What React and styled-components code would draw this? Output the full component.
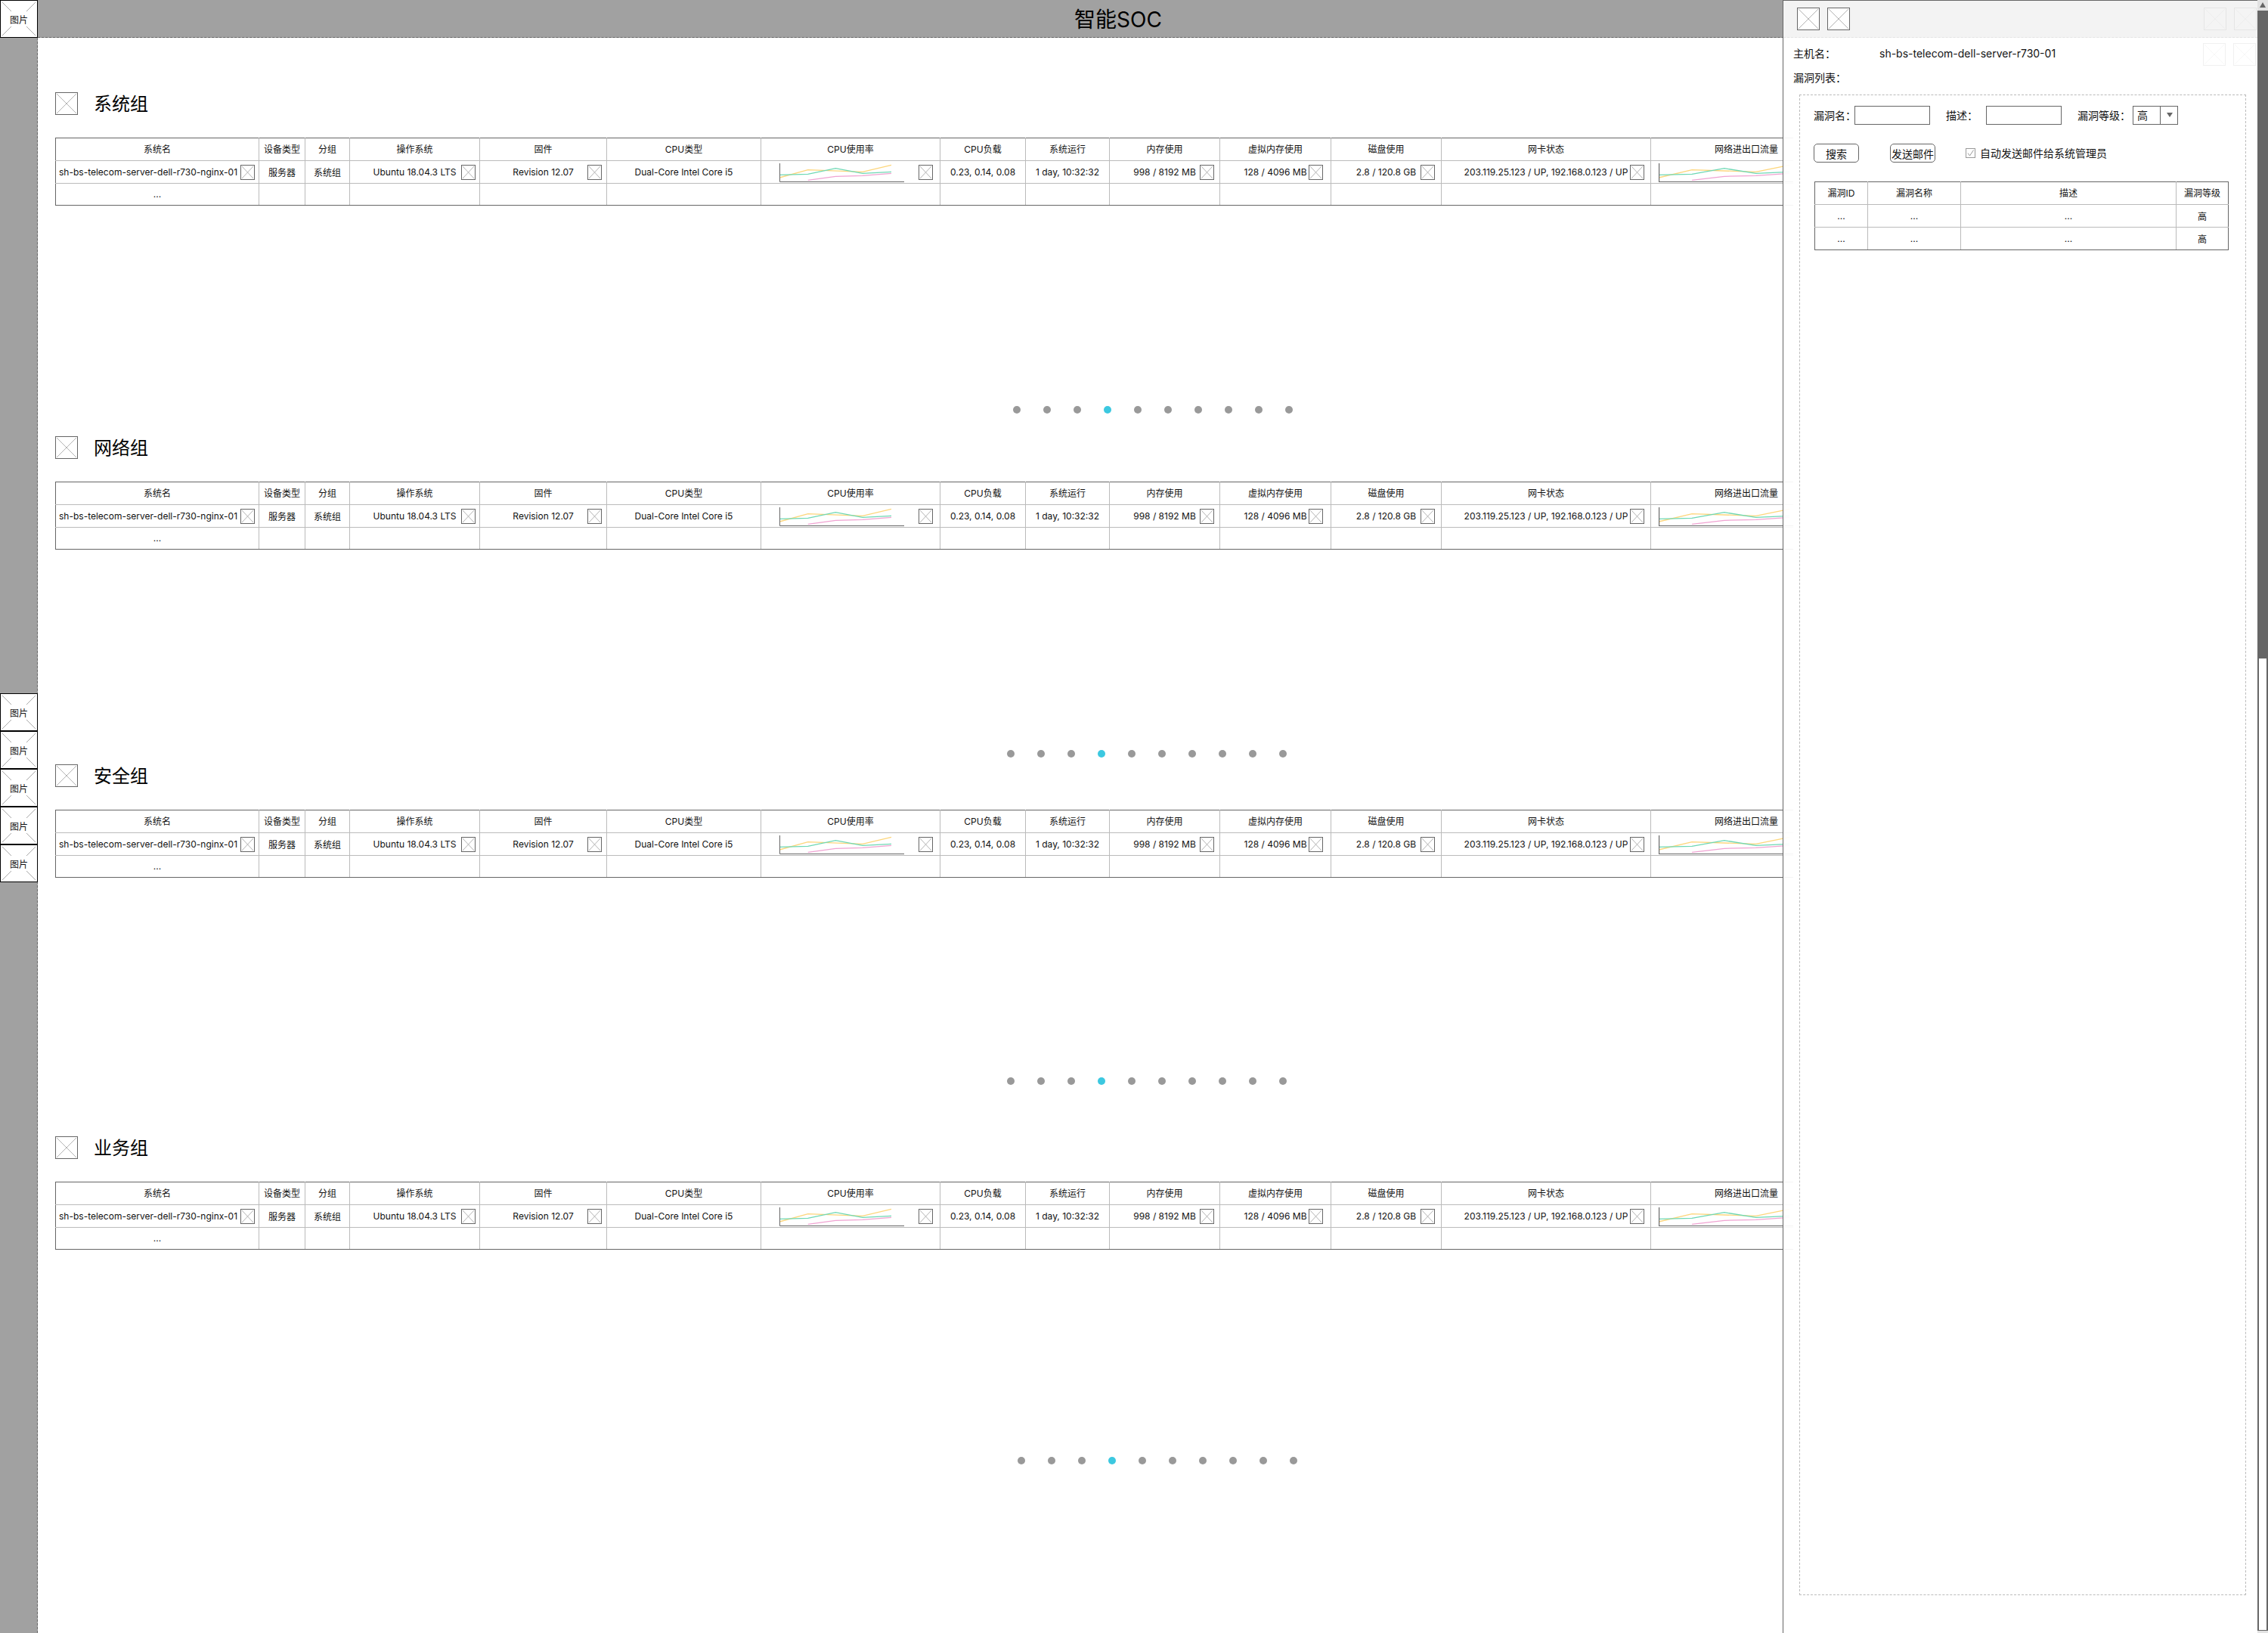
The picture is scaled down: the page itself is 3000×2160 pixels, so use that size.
import React from "react";
import styled, { createGlobalStyle } from "styled-components";

const FONT = `Inter, "Noto Sans CJK SC", sans-serif`;

const GlobalStyle = createGlobalStyle`
  html, body {
    margin: 0;
    padding: 0;
    background: #fff;
  }
  * {
    box-sizing: border-box;
  }
`;

const Page = styled.div`
  position: relative;
  width: 3000px;
  height: 2160px;
  overflow: hidden;
  display: grid;
  grid-template-columns: 50px 1fr;
  grid-template-rows: 50px 1fr;
  font-family: ${FONT};
  color: #111;
`;

const Header = styled.header`
  grid-column: 1 / 3;
  display: flex;
  align-items: flex-start;
  height: 50px;
  background: #a1a1a1;
  border-bottom: 1px dashed #666;
`;

const HeaderTitle = styled.h1`
  flex: 1;
  margin: 0;
  padding: 2px 92px 0 0;
  font-size: 28px;
  font-weight: 400;
  line-height: 48px;
  text-align: center;
  color: #000;
`;

const Rail = styled.aside`
  display: flex;
  flex-direction: column;
  padding-top: 867px;
  background: #a1a1a1;
  border-right: 1px dashed #666;
`;

const Main = styled.main`
  width: 2322px;
  height: 2110px;
  overflow: hidden;
  padding-left: 23px;
`;

const Section = styled.section`
  height: ${props => props.$height}px;
  padding-top: ${props => props.$top}px;
`;

const SectionHead = styled.div`
  display: flex;
  align-items: center;
  gap: 21px;
  height: 30px;
  margin-bottom: 30px;
`;

const SectionTitle = styled.h2`
  margin: 0 0 3px;
  font-size: 24px;
  font-weight: 400;
  color: #000;
`;

/* placeholder for a missing picture */
const Frame = styled.div`
  position: relative;
  flex-shrink: 0;
  width: ${props => props.$w}px;
  height: ${props => props.$h}px;
  background: #fff;
  border: 1px solid #666;

  svg {
    display: block;
    width: 100%;
    height: 100%;
  }
`;

function Cross({ w, h }) {
  const iw = w - 2;
  const ih = h - 2;
  return (
    <Frame $w={w} $h={h}>
      <svg viewBox={`0 0 ${iw} ${ih}`}>
        <path d={`M1 1L${iw - 1} ${ih - 1}M${iw - 1} 1L1 ${ih - 1}`} stroke="#b4b4b4" strokeWidth="1" fill="none" />
      </svg>
    </Frame>
  );
}

const LogoBox = styled.div`
  position: relative;
  flex-shrink: 0;
  width: 50px;
  height: 50px;
  background: #fff;
  border: 1px solid #000;
  display: flex;
  align-items: center;
  justify-content: center;
  font-size: 12px;
  color: #111;

  svg {
    position: absolute;
    inset: 0;
    width: 100%;
    height: 100%;
  }

  span {
    position: relative;
  }
`;

function Logo() {
  return (
    <LogoBox>
      <svg viewBox="0 0 48 48">
        <path d="M2 2L14 14M46 2L34 14M2 46L14 34M46 46L34 34" stroke="#aaa" strokeWidth="1" fill="none" />
      </svg>
      <span>图片</span>
    </LogoBox>
  );
}

const Table = styled.table`
  table-layout: fixed;
  border-collapse: collapse;
  width: ${props => props.$width}px;
  font-size: 12px;

  tr > *:first-child {
    border-left-color: #666;
  }
  tr > *:last-child {
    border-right-color: #666;
  }
  thead th {
    border-top-color: #666;
  }
  tbody tr:last-child td {
    border-bottom-color: #666;
  }
`;

const Cell = styled.td`
  position: relative;
  height: ${props => props.$h || 30}px;
  padding: ${props => (props.$left ? "0 0 1px 4px" : "0 0 1px")};
  border: 1px solid #bbb;
  text-align: ${props => (props.$left ? "left" : "center")};
  white-space: nowrap;
  overflow: visible;
  font-weight: 400;
`;

const HeadCell = styled(Cell).attrs({ as: "th" })`
  width: ${props => props.$w}px;
  padding-bottom: 2px;
`;

const CellIcon = styled.div`
  position: absolute;
  top: 5px;
  right: ${props => props.$right}px;
`;

const ChartBox = styled.div`
  position: absolute;
  top: 3px;
  left: ${props => props.$left}px;
  width: ${props => props.$w}px;
  height: 26px;

  svg {
    display: block;
    width: 100%;
    height: 100%;
  }
`;

function Spark({ left, w }) {
  return (
    <ChartBox $left={left} $w={w}>
      <svg viewBox="0 0 165 26" preserveAspectRatio="none">
        <path d="M0 19L37.7 8.7L110 11.3L148 2.3" fill="none" stroke="#fdd67c" strokeWidth="1.3" />
        <path d="M0 15.3L37.7 14.3L74.3 6.7L110 13.3L148 11.3" fill="none" stroke="#6ed8b4" strokeWidth="1.3" />
        <path d="M37.7 22.3L74.3 17.3L110 16.3L148 13.3" fill="none" stroke="#f0a3d2" strokeWidth="1.3" />
        <path d="M0.5 0V24.5H165" fill="none" stroke="#666" strokeWidth="1" />
      </svg>
    </ChartBox>
  );
}

const HOST_COLUMNS = [
  { title: "系统名", w: 269, value: "sh-bs-telecom-server-dell-r730-nginx-01", left: true, icon: 5 },
  { title: "设备类型", w: 61, value: "服务器" },
  { title: "分组", w: 59, value: "系统组" },
  { title: "操作系统", w: 172, value: "Ubuntu 18.04.3 LTS", icon: 5 },
  { title: "固件", w: 168, value: "Revision 12.07", icon: 6 },
  { title: "CPU类型", w: 204, value: "Dual-Core Intel Core i5" },
  { title: "CPU使用率", w: 237, chart: { left: 24, w: 165 }, icon: 9 },
  { title: "CPU负载", w: 113, value: "0.23, 0.14, 0.08" },
  { title: "系统运行", w: 111, value: "1 day, 10:32:32" },
  { title: "内存使用", w: 146, value: "998 / 8192 MB", icon: 7 },
  { title: "虚拟内存使用", w: 147, value: "128 / 4096 MB", icon: 10 },
  { title: "磁盘使用", w: 146, value: "2.8 / 120.8 GB", icon: 8 },
  { title: "网卡状态", w: 277, value: "203.119.25.123 / UP, 192.168.0.123 / UP", icon: 8 },
  { title: "网络进出口流量", w: 253, chart: { left: 10, w: 193 } },
];

const TABLE_WIDTH = HOST_COLUMNS.reduce((sum, c) => sum + c.w, 0);

function HostTable() {
  return (
    <Table $width={TABLE_WIDTH}>
      <thead>
        <tr>
          {HOST_COLUMNS.map(c => (
            <HeadCell key={c.title} $w={c.w}>{c.title}</HeadCell>
          ))}
        </tr>
      </thead>
      <tbody>
        <tr>
          {HOST_COLUMNS.map(c => (
            <Cell key={c.title} $left={c.left}>
              {c.value}
              {c.chart && <Spark left={c.chart.left} w={c.chart.w} />}
              {c.icon && (
                <CellIcon $right={c.icon}>
                  <Cross w={19} h={20} />
                </CellIcon>
              )}
            </Cell>
          ))}
        </tr>
        <tr>
          {HOST_COLUMNS.map((c, i) => (
            <Cell key={c.title} $h={29}>{i === 0 ? "..." : null}</Cell>
          ))}
        </tr>
      </tbody>
    </Table>
  );
}

const Pager = styled.div`
  display: flex;
  gap: 30px;
  margin-top: ${props => props.$top}px;
  margin-left: ${props => props.$left}px;
`;

const Dot = styled.span`
  width: 10px;
  height: 10px;
  border-radius: 50%;
  background: ${props => (props.$active ? "#3cc8e0" : "#999")};
`;

const GROUPS = [
  { name: "系统组", height: 527, top: 72, pagerTop: 265, pagerLeft: 1267 },
  { name: "网络组", height: 434, top: 0, pagerTop: 265, pagerLeft: 1259 },
  { name: "安全组", height: 492, top: 0, pagerTop: 264, pagerLeft: 1259 },
  { name: "业务组", height: 600, top: 0, pagerTop: 274, pagerLeft: 1273 },
];

function Group({ name, height, top, pagerTop, pagerLeft }) {
  return (
    <Section $height={height} $top={top}>
      <SectionHead>
        <Cross w={30} h={30} />
        <SectionTitle>{name}</SectionTitle>
      </SectionHead>
      <HostTable />
      <Pager $top={pagerTop} $left={pagerLeft}>
        {Array.from({ length: 10 }).map((_, i) => (
          <Dot key={i} $active={i === 3} />
        ))}
      </Pager>
    </Section>
  );
}

/* details drawer */
const Drawer = styled.div`
  position: absolute;
  top: 0;
  left: 2358px;
  width: 642px;
  height: 2160px;
  display: flex;
  background: rgba(255, 255, 255, 0.93);
  border-left: 1px solid #666;
  border-top: 1px solid #666;
`;

const DrawerBody = styled.div`
  position: relative;
  flex: 1;
  min-width: 0;
`;

const DrawerHead = styled.div`
  display: flex;
  align-items: center;
  gap: 10px;
  height: 49px;
  padding: 0 2px 0 18px;
  background: #f3f3f3;
  border-bottom: 1px dashed #e4e4e4;
`;

const Faded = styled.div`
  opacity: 0.09;
  margin-left: ${props => props.$left || 0}px;
`;

const FadedRow = styled.div`
  position: absolute;
  top: 56px;
  right: 2px;
  display: flex;
  gap: 10px;
`;

const InfoRow = styled.div`
  display: flex;
  align-items: center;
  height: 20px;
  margin: ${props => props.$top}px 0 0 13px;
  font-size: 14px;
`;

const InfoLabel = styled.span`
  width: 114px;
`;

const VulnBox = styled.div`
  height: 1985px;
  margin: 13px 15px 0 21px;
  padding: 14px 18px 0;
  border: 1px dashed #bbb;
`;

const FormRow = styled.div`
  display: flex;
  align-items: center;
  height: 25px;
  font-size: 14px;
  margin-bottom: 25px;
`;

const Label = styled.label`
  margin-left: ${props => props.$left || 0}px;
  width: ${props => props.$w}px;
  padding-bottom: 2px;
  white-space: nowrap;
`;

const CheckLabel = styled.span`
  padding-bottom: 2px;
`;

const Input = styled.div`
  width: 100px;
  height: 25px;
  background: #fff;
  border: 1px solid #666;
`;

const Select = styled.div`
  display: flex;
  width: 60px;
  height: 25px;
  background: #fff;
  border: 1px solid #666;
  line-height: 23px;

  span {
    width: 36px;
    padding-left: 5px;
    border-right: 1px solid #666;
  }

  i {
    flex: 1;
    position: relative;
  }

  i::after {
    content: "";
    position: absolute;
    top: 8px;
    left: 8px;
    border-left: 4px solid transparent;
    border-right: 4px solid transparent;
    border-top: 6px solid #666;
  }
`;

const Button = styled.button`
  width: 60px;
  height: 25px;
  margin-left: ${props => props.$left || 0}px;
  padding: 0;
  background: #fff;
  border: 1px solid #666;
  border-radius: 5px;
  font-family: ${FONT};
  font-size: 14px;
  color: #111;
`;

const Check = styled.span`
  display: flex;
  align-items: center;
  justify-content: center;
  width: 13px;
  height: 13px;
  margin: 0 6px 0 40px;
  border: 1px solid #999;

  svg {
    width: 11px;
    height: 11px;
  }
`;

const VulnTableWrap = styled.div`
  margin-left: 1px;
`;

const VULN_COLUMNS = [
  { title: "漏洞ID", w: 70, value: "..." },
  { title: "漏洞名称", w: 123, value: "..." },
  { title: "描述", w: 285, value: "..." },
  { title: "漏洞等级", w: 69, value: "高" },
];

const Scrollbar = styled.div`
  display: flex;
  flex-direction: column;
  flex-shrink: 0;
  width: 14px;
  height: 2160px;
  margin-top: -1px;
  background: #fff;
  border-left: 2px solid #666;
  border-right: 2px solid #666;
`;

const ScrollButton = styled.div`
  position: relative;
  flex-shrink: 0;
  height: ${props => (props.$down ? 4 : 14)}px;
  margin: ${props => props.$top || 0}px -2px 0;
  background: #e2e2e2;
  border-top: ${props => (props.$down ? "1px solid #666" : "none")};

  &::after {
    content: "";
    display: ${props => (props.$down ? "none" : "block")};
    position: absolute;
    top: 3px;
    left: 3px;
    border-left: 4px solid transparent;
    border-right: 4px solid transparent;
    border-bottom: 7px solid #666;
  }
`;

const ScrollThumb = styled.div`
  flex-shrink: 0;
  height: 857px;
  background: #666;
`;

function VulnDrawer() {
  return (
    <Drawer>
      <DrawerBody>
        <DrawerHead>
          <Cross w={30} h={30} />
          <Cross w={30} h={30} />
          <Faded $left={458}><Cross w={30} h={30} /></Faded>
          <Faded><Cross w={30} h={30} /></Faded>
        </DrawerHead>
        <FadedRow>
          <Faded><Cross w={30} h={30} /></Faded>
          <Faded><Cross w={30} h={30} /></Faded>
        </FadedRow>
        <InfoRow $top={10}>
          <InfoLabel>主机名：</InfoLabel>
          <span>sh-bs-telecom-dell-server-r730-01</span>
        </InfoRow>
        <InfoRow $top={12}>漏洞列表：</InfoRow>
        <VulnBox>
          <FormRow>
            <Label $w={54}>漏洞名：</Label>
            <Input />
            <Label $left={21} $w={53}>描述：</Label>
            <Input />
            <Label $left={21} $w={73}>漏洞等级：</Label>
            <Select>
              <span>高</span>
              <i />
            </Select>
          </FormRow>
          <FormRow>
            <Button>搜索</Button>
            <Button $left={41}>发送邮件</Button>
            <Check>
              <svg viewBox="0 0 11 11">
                <path d="M2 5.5L4.5 9L9.5 1.5" fill="none" stroke="#999" strokeWidth="1" />
              </svg>
            </Check>
            <CheckLabel>自动发送邮件给系统管理员</CheckLabel>
          </FormRow>
          <VulnTableWrap>
            <Table $width={547}>
              <thead>
                <tr>
                  {VULN_COLUMNS.map(c => (
                    <HeadCell key={c.title} $w={c.w}>{c.title}</HeadCell>
                  ))}
                </tr>
              </thead>
              <tbody>
                {[0, 1].map(row => (
                  <tr key={row}>
                    {VULN_COLUMNS.map(c => (
                      <Cell key={c.title}>{c.value}</Cell>
                    ))}
                  </tr>
                ))}
              </tbody>
            </Table>
          </VulnTableWrap>
        </VulnBox>
      </DrawerBody>
      <Scrollbar>
        <ScrollButton />
        <ScrollThumb />
        <ScrollButton $down $top={1285} />
      </Scrollbar>
    </Drawer>
  );
}

export default function App() {
  return (
    <Page>
      <GlobalStyle />
      <Header>
        <Logo />
        <HeaderTitle>智能SOC</HeaderTitle>
      </Header>
      <Rail>
        {[0, 1, 2, 3, 4].map(i => <Logo key={i} />)}
      </Rail>
      <Main>
        {GROUPS.map(g => <Group key={g.name} {...g} />)}
      </Main>
      <VulnDrawer />
    </Page>
  );
}
